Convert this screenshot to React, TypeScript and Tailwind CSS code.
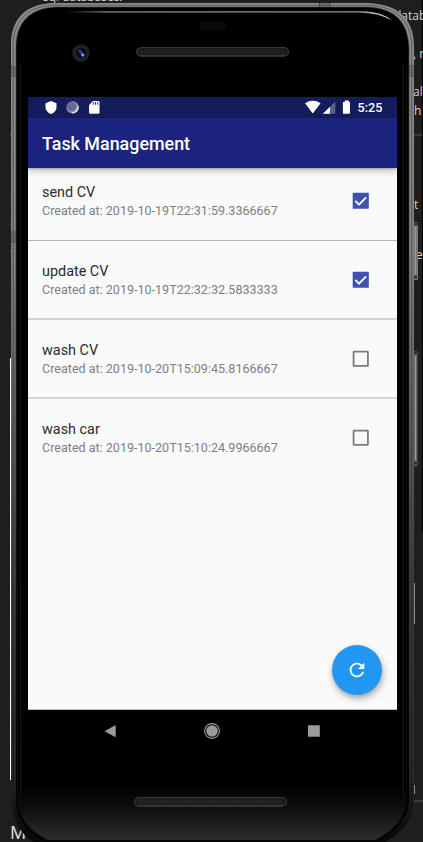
import React from "react";

type Task = { name: string; created: string; done: boolean; box: string };

const tasks: Task[] = [
  { name: "send CV", created: "2019-10-19T22:31:59.3366667", done: true, box: "h-[73px] border-b border-[#b4b4b4] pt-[15px]" },
  { name: "update CV", created: "2019-10-19T22:32:32.5833333", done: true, box: "h-[79px] border-b-2 border-[#d3d3d3] pt-[21px]" },
  { name: "wash CV", created: "2019-10-20T15:09:45.8166667", done: false, box: "h-[79px] border-b-2 border-[#d6d6d6] pt-[21px]" },
  { name: "wash car", created: "2019-10-20T15:10:24.9966667", done: false, box: "h-[79px] pt-[21px]" },
];

function Speaker({ x, y }: { x: number; y: number }) {
  return (
    <g>
      <rect x={x + 0.5} y={y + 0.5} width="152" height="8.5" rx="4" fill="#1d1c1a" stroke="#3a3936" />
      <path d={`M${x + 5} ${y + 4.8}H${x + 149}`} stroke="#2b2823" strokeWidth="4" strokeDasharray="1.4 1.6" />
      <path d={`M${x + 4} ${y + 9}H${x + 149}`} stroke="#58544b" strokeWidth=".7" />
    </g>
  );
}

function Device() {
  return (
    <svg className="col-start-1 row-start-1" width="423" height="842" viewBox="0 0 423 842">
      <defs>
        <linearGradient id="rim" gradientUnits="userSpaceOnUse" x1="0" y1="0" x2="0" y2="842">
          <stop offset="0" stopColor="#8a8a8a" />
          <stop offset=".3" stopColor="#808080" />
          <stop offset=".55" stopColor="#555" />
          <stop offset=".72" stopColor="#383838" />
          <stop offset=".92" stopColor="#292929" />
          <stop offset="1" stopColor="#080808" />
        </linearGradient>
        <linearGradient id="chin" gradientUnits="userSpaceOnUse" x1="0" y1="785" x2="0" y2="841">
          <stop offset="0" stopColor="#000" />
          <stop offset=".45" stopColor="#101010" />
          <stop offset=".9" stopColor="#292929" />
          <stop offset="1" stopColor="#2c2c2c" />
        </linearGradient>
        <linearGradient id="gloss" x1="0" y1="0" x2="1" y2="0">
          <stop offset="0" stopColor="#777" stopOpacity="0" />
          <stop offset=".12" stopColor="#888" />
          <stop offset=".9" stopColor="#999" />
          <stop offset="1" stopColor="#ccc" />
        </linearGradient>
        <linearGradient id="edge" gradientUnits="userSpaceOnUse" x1="0" y1="0" x2="0" y2="842">
          <stop offset="0" stopColor="#4a4a4a" />
          <stop offset=".6" stopColor="#303030" />
          <stop offset=".85" stopColor="#171717" />
          <stop offset="1" stopColor="#050505" />
        </linearGradient>
      </defs>
      <rect width="423" height="842" fill="#1e1e1e" />
      <path d="M422.5 0V532" stroke="#000" />
      <g fill="#d4d4d4" fontFamily='"Open Sans", sans-serif' fontSize="12">
        <text x="43" y="1" fontSize="12">sql databases.</text>
        <text x="394" y="20">datab</text>
        <text x="413" y="58">, n</text>
        <text x="413" y="96">al</text>
        <text x="414" y="115">h</text>
        <text x="414" y="209">t</text>
        <text x="416" y="259">e</text>
        <text x="10" y="839" fontSize="18" fill="#e2e2e2">M</text>
      </g>
      <path d="M10.5 358V780" stroke="#fff" />
      <path d="M414.500 583V624M414.500 785V794" stroke="#8c8c8c" />
      <path d="M413 135H422M413 801H423" stroke="#555" />
      <path d="M10 135h1M10 160h1M10 200h1M10 224h1M10 251h1" stroke="#777" />
      <rect x="413" y="222" width="5" height="58" rx="1.5" fill="#777" />
      <path d="M415.500 227V275" stroke="#999" />
      <path d="M413 224h5M413 277h4" stroke="#333" strokeWidth="3" />
      <rect x="413" y="351" width="4.500" height="115" rx="1.5" fill="#666" />
      <path d="M415.500 356V460" stroke="#9a9a9a" />
      <path d="M413 353h4M413 463h4" stroke="#333" strokeWidth="3" />
      <path d="M53 3H367C398 4 413 18 414 45V803Q413 827 385 842H33Q13 828 11 803V40C13 17 27 4 53 3Z" fill="url(#rim)" />
      <path d="M54 5.200H367C396 6 411 20 411.800 46V802Q410 828 380 841.500H37Q15 826 13.200 802V42C15 19 29 6 54 5.200Z" fill="none" stroke="url(#edge)" strokeWidth=".7" />
      <path d="M11 67H17M11 76H17M11 232H17M11 242H17M408 66H414M408 76H414M408 773H414M408 783H414M319.500 3v5M330 3v5" stroke="#343434" strokeWidth=".7" />
      <path d="M11 68h6v7h-6zM11 233h6v8h-6zM408 67h6v8h-6zM320 3h10v5h-10z" fill="#4d4d4d" opacity=".5" />
      <path d="M56 7H367C395 8 408 22 409 48V802Q407 827 377 841H44Q17 828 16 802V45C17 21 31 8 56 7Z" fill="#000" stroke="url(#edge)" strokeWidth=".6" />
      <path d="M18 790H406V803Q403 826 375 840H48Q20 827 18 803Z" fill="url(#chin)" />
      <path d="M20.500 65V797M403.500 65V797" fill="none" stroke="#1c1c1c" strokeWidth=".8" />
      <path d="M17.700 65V802Q19 825 46 840M406.800 65V802Q405 825 377 840" fill="none" stroke="#0d0d0d" />
      <path d="M66 11.200H363Q382 11.600 392 20.500Q380 13 359 12.400H66Z" fill="url(#gloss)" />
      <circle cx="81" cy="53" r="8.700" fill="#20201f" />
      <circle cx="81" cy="53" r="5" fill="#090b1d" />
      <path d="M79 50l4 5" stroke="#3344a4" strokeWidth="2.400" />
      <circle cx="82.800" cy="55" r="1.600" fill="#899ae9" />
      <rect x="199" y="21" width="27" height="9" rx="4.500" fill="#08090d" />
      <Speaker x={136} y={47} />
      <Speaker x={134} y={797} />
    </svg>
  );
}

function StatusBar() {
  return (
    <div className="flex h-[21px] bg-[#141c5b]">
      <svg width="322" height="21" viewBox="28 97 322 21" fill="#fff">
        <path d="M51 101l5.500 2.200v4c0 3-2.200 5.500-5.500 6.900c-3.300-1.400-5.500-3.900-5.500-6.900v-4z" />
        <circle cx="72.600" cy="107.400" r="6.200" fill="#8d91b5" />
        <circle cx="71.600" cy="106.500" r="4.600" fill="#646999" />
        <path d="M78.300 106.500a6 6 0 0 1-6.300 6.500q5-1 6.300-6.500z" stroke="#fff" strokeWidth=".6" />
        <path d="M93 101h5.300q1.200 0 1.200 1.200v10.400q0 1.200-1.200 1.200h-8q-1.200 0-1.200-1.200v-7.600z" />
        <path d="M93.300 102.200v2.500M95.500 102.200v2.500M97.700 102.200v2.500" stroke="#141c5b" />
        <path d="M305 103.200q7.800-4.900 15.600 0l-7.800 10.400z" />
        <path d="M335.300 101.500v12.300h-12.400z" fill="#5b6090" />
        <path d="M330 106.800v7h-7.100z" />
        <path d="M344.800 101.900v-1.400h4v1.400h1.200v11q0 .9-.9.900h-5.300q-.9 0-.9-.9v-11z" />
      </svg>
      <span className="w-10 pl-[7.500px] text-[12.600px] leading-[22px] font-medium text-white">5:25</span>
    </div>
  );
}

function Checkbox({ checked }: { checked: boolean }) {
  return (
    <svg className="mt-[6.500px] shrink-0" width="21.500" height="21.500" viewBox="0 0 24 24">
      {checked ? (
        <>
          <rect x="3" y="3" width="18" height="18" rx="1" fill="#3f51b5" />
          <path d="M6 12.200l4 4.100 8-8.200" fill="none" stroke="#fff" strokeWidth="2" />
        </>
      ) : (
        <rect x="4" y="4" width="16" height="16" rx=".5" fill="none" stroke="#7b7b7b" strokeWidth="2" />
      )}
    </svg>
  );
}

export default function App() {
  return (
    <div className="grid h-[842px] w-[423px] overflow-hidden bg-[#1e1e1e] font-['Roboto',sans-serif]">
      <Device />
      <div className="z-10 col-start-1 row-start-1 mt-[97px] ml-7 flex h-[655px] w-[369px] flex-col">
        <StatusBar />
        <header className="z-10 flex h-[50px] bg-[#1b237e] pt-3 pl-3.5 text-[17.900px] leading-[28px] font-medium text-white shadow-[0_3px_7px_rgba(0,0,0,0.22),0_1px_2px_rgba(0,0,0,0.22)]">
          <h1>Task Management</h1>
        </header>
        <main className="flex h-[542px] flex-col border-b border-[#b6c2b9] bg-[#fafafa]">
          <ul>
            {tasks.map((t) => (
              <li key={t.name} className={`flex justify-between pr-[25.500px] pl-3.5 ${t.box}`}>
                <div>
                  <p className="text-[14.400px] leading-[19px] text-[#2b2b2b]">{t.name}</p>
                  <p className="text-[12.550px] leading-[18px] text-[#808080]">Created at: {t.created}</p>
                </div>
                <Checkbox checked={t.done} />
              </li>
            ))}
          </ul>
          <button className="mt-auto mr-[15px] mb-3.5 flex size-[50px] items-center justify-center self-end rounded-full bg-[#2196f3] shadow-[0_3px_5px_rgba(0,0,0,0.2),2px_4px_8px_rgba(0,0,0,0.18)]">
            <svg width="22" height="22" viewBox="0 0 24 24" fill="#fff">
              <path d="M17.650 6.350A7.958 7.958 0 0 0 12 4c-4.420 0-7.990 3.580-7.990 8s3.570 8 7.990 8c3.730 0 6.840-2.550 7.730-6h-2.080A5.990 5.990 0 0 1 12 18c-3.310 0-6-2.690-6-6s2.690-6 6-6c1.660 0 3.140.69 4.220 1.780L13 11h7V4l-2.350 2.350z" />
            </svg>
          </button>
        </main>
        <nav className="h-[42px] bg-black">
          <svg width="369" height="42" viewBox="28 710 369 42" fill="#9b9b9b">
            <path d="M104.500 731.200L115.700 725v12.200z" />
            <circle cx="212" cy="731" r="5.800" />
            <circle cx="212" cy="731" r="7.400" fill="none" stroke="#9b9b9b" strokeWidth="1.100" />
            <rect x="308" y="725.300" width="11.800" height="11.500" rx=".5" />
          </svg>
        </nav>
      </div>
    </div>
  );
}
